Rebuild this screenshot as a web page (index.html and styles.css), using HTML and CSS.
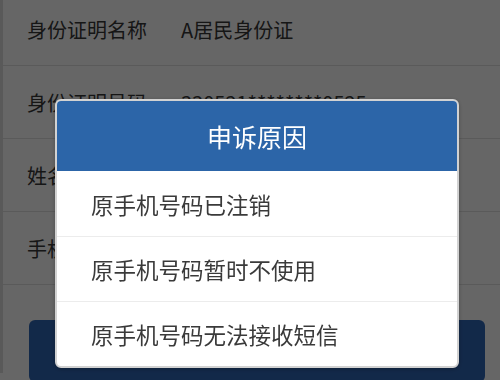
FILE: index.html
```html
<!DOCTYPE html>
<html lang="zh-CN">
<head>
<meta charset="utf-8">
<title>申诉原因</title>
<link rel="stylesheet" href="styles.css">
</head>
<body>
<div class="page">
  <div class="list">
    <div class="row"><span class="label">身份证明名称</span><span class="value">A居民身份证</span></div>
    <div class="row"><span class="label">身份证明号码</span><span class="value">330521********0525</span></div>
    <div class="row"><span class="label">姓名</span><span class="value"></span></div>
    <div class="row"><span class="label">手机号码</span><span class="value"></span></div>
  </div>
  <div class="submit"></div>
</div>
<div class="mask"></div>
<div class="dialog">
  <div class="dialog-title">申诉原因</div>
  <div class="dialog-item">原手机号码已注销</div>
  <div class="dialog-item">原手机号码暂时不使用</div>
  <div class="dialog-item">原手机号码无法接收短信</div>
</div>
</body>
</html>
```
FILE: styles.css
```css
html, body {
  margin: 0;
  padding: 0;
  height: 100%;
  overflow: hidden;
  background: #fff;
  font-family: "Noto Sans CJK SC", "Noto Sans", sans-serif;
}
.page {
  height: 100%;
  border-left: 3px solid #dedede;
  box-sizing: border-box;
}
.list {
  margin-top: -7px;
}
.row {
  display: grid;
  grid-template-columns: 154px 1fr;
  align-items: center;
  height: 72px;
  padding-left: 24px;
  border-bottom: 1px solid #e2e2e2;
  font-size: 20px;
  color: #383838;
}
.submit {
  margin: 35px 15px 0 26px;
  height: 62px;
  border-radius: 6px;
  background: #2f66b6;
}
.mask {
  position: fixed;
  inset: 0;
  background: rgba(0, 0, 0, 0.6);
}
.dialog {
  position: fixed;
  left: 55px;
  top: 99px;
  width: 400px;
  border: 2px solid #d2d2d2;
  border-radius: 6px;
  background: #fff;
  overflow: hidden;
  box-shadow: 0 1px 4px rgba(0, 0, 0, 0.25);
}
.dialog-title {
  height: 70px;
  display: flex;
  align-items: center;
  justify-content: center;
  background: #2c65a8;
  color: #fff;
  font-size: 25px;
}
.dialog-item {
  height: 64px;
  display: flex;
  align-items: center;
  padding-left: 34px;
  font-size: 22.5px;
  color: #3a3a3a;
  border-top: 1px solid #ececec;
}
.dialog-title + .dialog-item {
  border-top: 0;
  height: 65px;
}
```
